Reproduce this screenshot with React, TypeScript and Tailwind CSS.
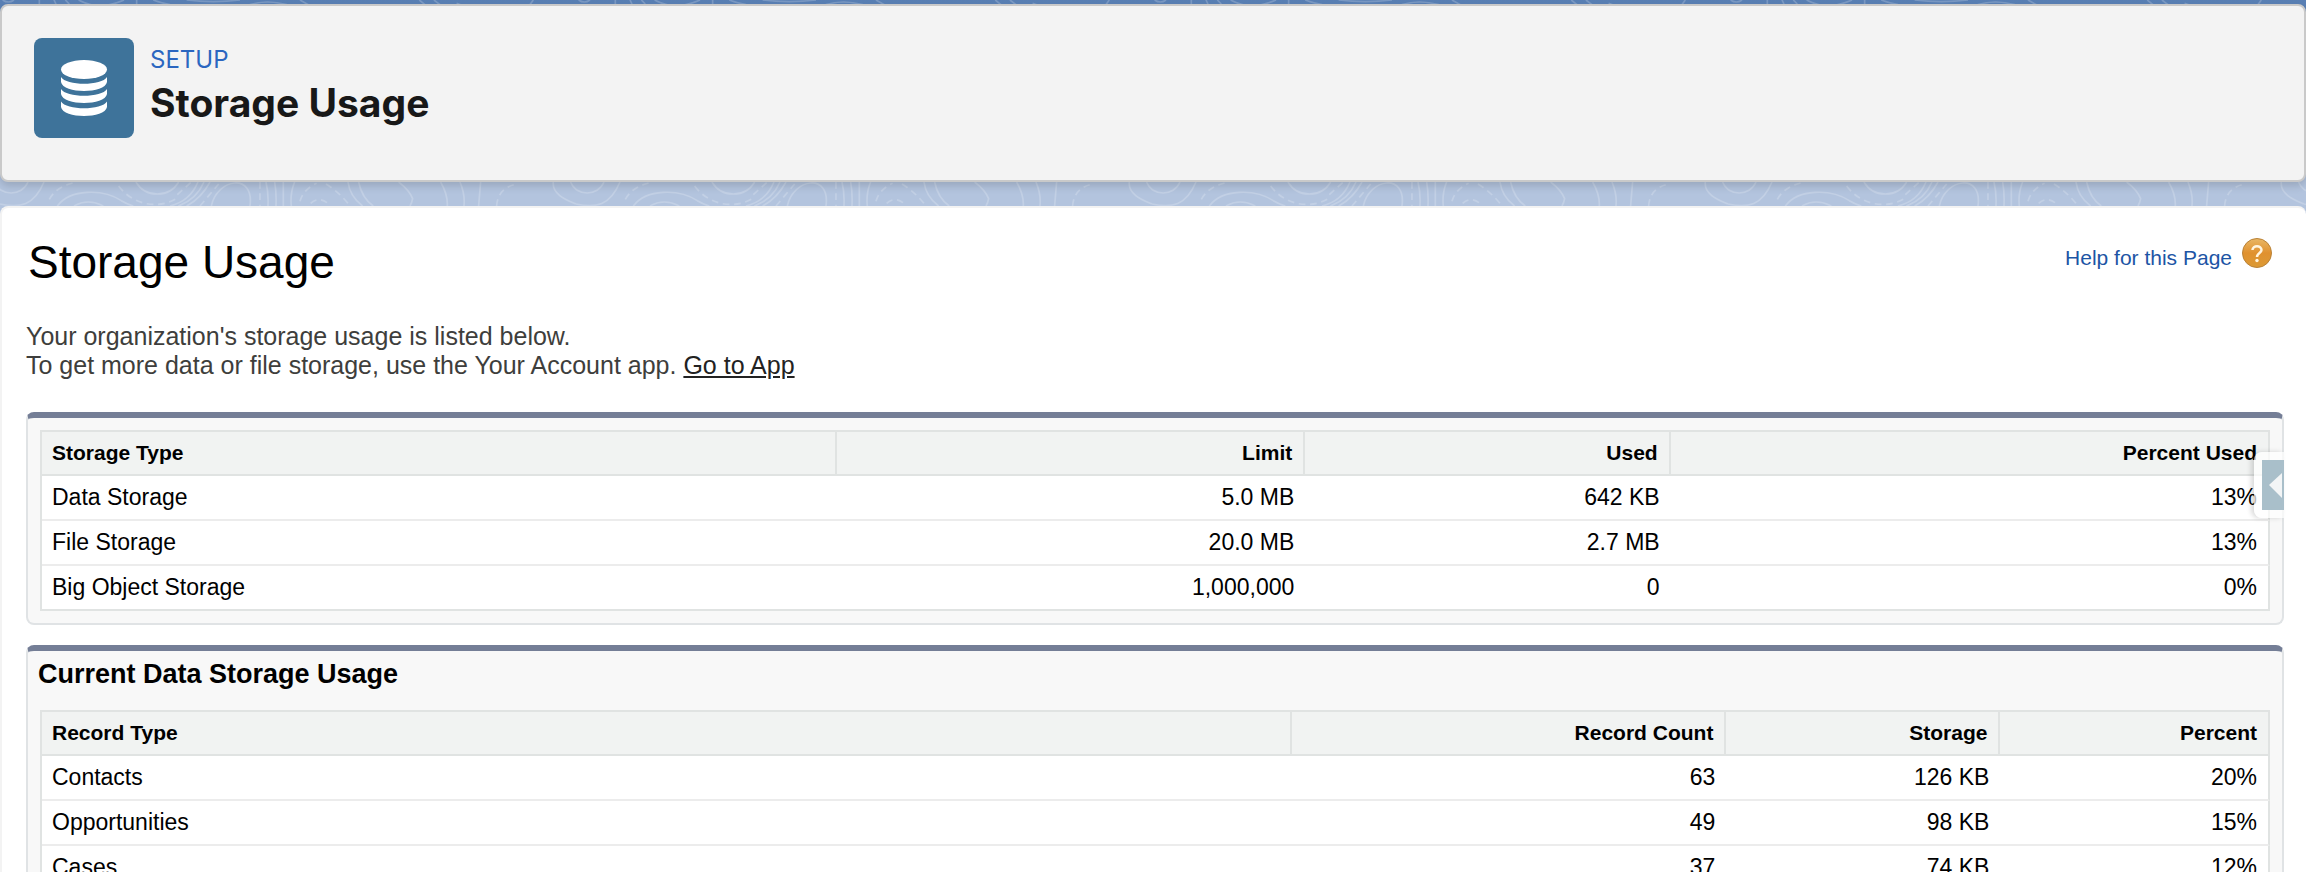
import React, { FC } from "react";

type Column = { label: string; width: string };

type UsageTableProps = {
  columns: Column[];
  rows: string[][];
};

const storageColumns: Column[] = [
  { label: "Storage Type", width: "w-[35.7%]" },
  { label: "Limit", width: "w-[21%]" },
  { label: "Used", width: "w-[16.4%]" },
  { label: "Percent Used", width: "w-[26.9%]" },
];

const storageRows = [
  ["Data Storage", "5.0 MB", "642 KB", "13%"],
  ["File Storage", "20.0 MB", "2.7 MB", "13%"],
  ["Big Object Storage", "1,000,000", "0", "0%"],
];

const recordColumns: Column[] = [
  { label: "Record Type", width: "w-[56.1%]" },
  { label: "Record Count", width: "w-[19.5%]" },
  { label: "Storage", width: "w-[12.3%]" },
  { label: "Percent", width: "w-[12.1%]" },
];

const recordRows = [
  ["Contacts", "63", "126 KB", "20%"],
  ["Opportunities", "49", "98 KB", "15%"],
  ["Cases", "37", "74 KB", "12%"],
];

// Contour lines behind the cards, one tile is 576px wide
const Contours: FC = () => {
  return (
    <svg
      className="pointer-events-none absolute inset-x-0 top-0 h-[220px] w-full"
      fill="none"
      aria-hidden="true"
    >
      <defs>
        <pattern id="contour-top" width="576" height="4" patternUnits="userSpaceOnUse">
          <g transform="scale(0.3333)" stroke="#fff" strokeOpacity="0.2" strokeWidth="5">
            <path d="M8 0Q25 12 42 0M118 0V12M162 0L168 12M196 0L208 12M236 0Q258 12 282 16M372 0Q350 10 320 16M410 0V12M460 0Q480 8 510 14M560 0Q640 10 720 0M750 14Q800 -2 860 14M900 0L925 14M1258 0L1275 14M1302 0L1320 14M1370 10L1382 14M1600 0L1590 14" />
          </g>
        </pattern>
        <pattern id="contour-band" y="182" width="576" height="24" patternUnits="userSpaceOnUse">
          <g
            transform="scale(0.3333) translate(0 -18)"
            stroke="#fff"
            strokeOpacity="0.2"
            strokeWidth="5"
          >
            <path d="M-16 18C0 62 66 62 84 18M1712 18C1728 62 1794 62 1812 18" />
            <path d="M-68 18C-72 56 -28 72 0 84C60 96 102 90 132 18M1660 18C1656 56 1700 72 1728 84" />
            <path d="M172 90C210 38 310 38 364 74Q385 86 400 90M222 90Q264 66 310 90" />
            <path d="M408 18C436 66 508 66 536 18" />
            <path d="M510 90Q570 76 594 18M535 90Q590 70 612 18M560 90Q604 66 630 18" />
            <path d="M634 90C652 6 764 -10 750 90M798 18Q806 50 804 90M824 18Q830 50 828 90M850 18V90M884 18Q870 52 874 90" />
            <path d="M1044 18Q1050 62 1088 90M1076 18Q1086 66 1120 90M1196 18Q1228 42 1238 68Q1236 80 1230 90" />
            <path d="M1322 18Q1344 56 1342 90M1380 18Q1396 56 1392 90M1442 18L1436 90" />
            <path
              strokeDasharray="20 14"
              d="M148 70Q170 30 230 18M356 30C400 90 480 100 532 66M532 56L574 18M600 90L656 24M780 18V90M900 76Q910 40 950 22M978 24Q1020 50 1050 90M1490 90Q1494 36 1550 24M932 82Q956 60 984 82"
            />
          </g>
        </pattern>
      </defs>
      <rect width="100%" height="4" fill="url(#contour-top)" />
      <rect y="182" width="100%" height="24" fill="url(#contour-band)" />
    </svg>
  );
};

const DatabaseIcon: FC = () => {
  return (
    <svg viewBox="0 0 100 100" className="size-[100px] shrink-0 rounded-lg bg-[#3e739a]" fill="#fff" aria-hidden="true">
      <ellipse cx="50" cy="31.500" rx="23" ry="9.500" />
      <path d="M27 39C32 48 68 48 73 39V44C71 56 29 56 27 44Z" />
      <path d="M27 51C32 60 68 60 73 51V56C71 68 29 68 27 56Z" />
      <path d="M27 63.500C32 72.500 68 72.500 73 63.500V69C71 81 29 81 27 69Z" />
    </svg>
  );
};

const HelpIcon: FC = () => {
  return (
    <svg viewBox="0 0 30 30" className="size-[30px]" fill="none" aria-hidden="true">
      <defs>
        <linearGradient id="help-fill" x1="0" y1="0" x2="0" y2="1">
          <stop offset="0" stopColor="#e9b765" />
          <stop offset="0.5" stopColor="#e0912f" />
          <stop offset="1" stopColor="#dc9a35" />
        </linearGradient>
      </defs>
      <circle cx="15" cy="15" r="14.500" fill="url(#help-fill)" stroke="#b98238" />
      <path
        d="M10.500 12C10.500 7 19.500 7 19.500 12C19.500 15 15 15 15 19"
        stroke="#fff5e0"
        strokeWidth="2.500"
      />
      <circle cx="15" cy="22.500" r="1.700" fill="#fff5e0" />
    </svg>
  );
};

const UsageTable: FC<UsageTableProps> = ({ columns, rows }) => {
  return (
    <table className="w-full table-fixed border-separate border-spacing-0 border-t-2 border-l-2 border-[#e0e3e2] bg-white">
      <thead>
        <tr className="h-11 bg-[#f1f3f2] text-[21px] leading-6">
          {columns.map((column) => (
            <th
              key={column.label}
              scope="col"
              className={`${column.width} border-r-2 border-b-2 border-[#e0e3e2] pr-[11px] pl-2.5 text-right font-bold first:text-left`}
            >
              {column.label}
            </th>
          ))}
        </tr>
      </thead>
      <tbody>
        {rows.map((row) => (
          <tr key={row[0]} className="group h-[45px] text-[23px] leading-7">
            {row.map((cell, i) => (
              <td
                key={i}
                className="border-b-2 border-[#ececec] pr-[11px] pb-0.5 pl-2.5 text-right group-last:border-b-[#e0e3e2] first:text-left last:border-r-2 last:border-r-[#e0e3e2]"
              >
                {cell}
              </td>
            ))}
          </tr>
        ))}
      </tbody>
    </table>
  );
};

const Panel: FC<{ children: React.ReactNode }> = ({ children }) => {
  return (
    <section className="relative rounded-lg border-2 border-t-[6px] border-[#e0e3e5] border-t-[#747e96] bg-[#f8f8f8] p-3">
      {children}
    </section>
  );
};

const App: FC = () => {
  return (
    <div className="relative h-screen overflow-hidden bg-[#b3c4de] bg-[linear-gradient(#587fb4,#b3c4de_182px)] pt-1 font-['Liberation_Sans',Arial,sans-serif] text-black">
      <Contours />

      <header className="relative flex gap-4 rounded-lg border-2 border-[#c9c9c9] bg-[#f3f3f3] px-8 pt-8 pb-[42px] font-[Inter,sans-serif] shadow-[0_4px_8px_rgba(0,0,0,0.15)]">
        <DatabaseIcon />
        <div className="pt-1.5">
          <p className="text-[24px] leading-8 text-[#2b66c0]">SETUP</p>
          <p className="text-[39px] leading-[54px] font-bold text-[#181818]">Storage Usage</p>
        </div>
      </header>

      <main className="relative mt-6 rounded-t-lg border-t-2 border-l-2 border-[#f3f3f3] bg-white pt-[26px] pr-[22px] pb-8 pl-6">
        <div className="flex items-start justify-between">
          <h1 className="pl-0.5 text-[46px] leading-[56px]">Storage Usage</h1>
          <a href="#help" className="flex gap-2.5 pt-1 pr-3 text-[21px] leading-10 text-[#1d55a5]">
            Help for this Page
            <HelpIcon />
          </a>
        </div>

        <p className="my-8 text-[25px] leading-[29px] text-[#3e3e3c]">
          Your organization&apos;s storage usage is listed below.
          <br />
          To get more data or file storage, use the Your Account app.{" "}
          <a href="#app" className="text-[#222] underline">
            Go to App
          </a>
        </p>

        <div className="space-y-5">
          <Panel>
            <UsageTable columns={storageColumns} rows={storageRows} />
            <button
              type="button"
              aria-label="Open sidebar"
              className="absolute top-[34px] -right-0.5 flex h-[66px] w-[30px] items-center justify-end rounded-l-lg bg-white/70 shadow-[-3px_0_5px_rgba(0,0,0,0.15)]"
            >
              <svg viewBox="0 0 22 50" className="h-[50px] w-[22px] bg-[#a9bfca]" aria-hidden="true">
                <path d="M7 25L20 13V38Z" fill="#f3f5f6" />
              </svg>
            </button>
          </Panel>

          <Panel>
            <h2 className="-mt-[9px] mb-5 -ml-0.5 pt-1 text-[27px] leading-8 font-bold">
              Current Data Storage Usage
            </h2>
            <UsageTable columns={recordColumns} rows={recordRows} />
          </Panel>
        </div>
      </main>
    </div>
  );
};

export default App;
